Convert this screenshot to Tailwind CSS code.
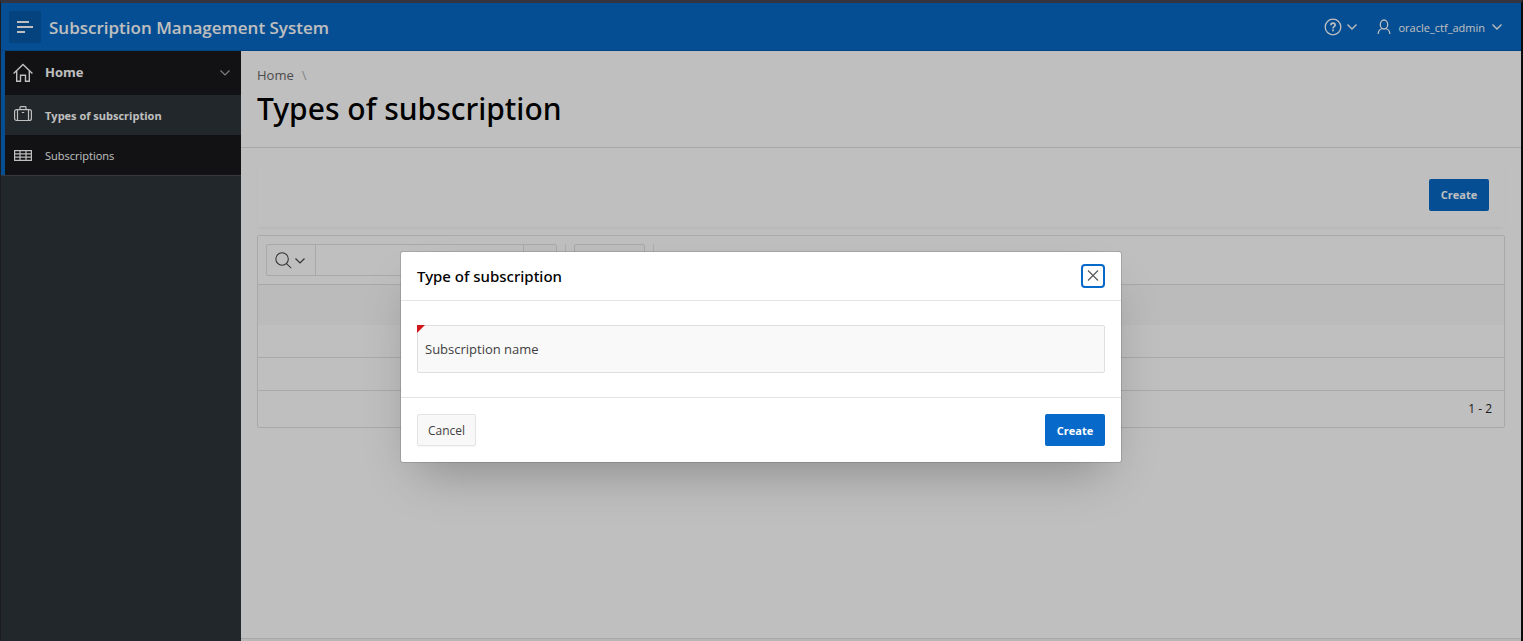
<!DOCTYPE html>
<html lang="en">
<head>
<meta charset="utf-8">
<meta name="viewport" content="width=device-width, initial-scale=1">
<title>Types of subscription</title>
<script src="https://cdn.jsdelivr.net/npm/@tailwindcss/browser@4"></script>
</head>
<body class="min-h-screen bg-[#1c1c1e] font-['Open_Sans','Noto_Sans',sans-serif] text-xs text-[#262626]">
<div class="flex min-h-screen flex-col border-t-3 border-r-2 border-l border-t-[#33343e] border-r-[#0b0b0f] border-l-[#1c1c1e]">
<div class="relative flex grow flex-col bg-white">

  <header class="flex h-12 items-center bg-[#0769c4] pr-4.5 pl-2 text-white shadow-[inset_0_-1px_0_#055cad]">
    <button type="button" aria-label="Toggle navigation" class="flex size-8 items-center justify-center rounded-xs bg-[#065aa9]">
      <svg class="size-4" viewBox="0 0 16 16" fill="none" stroke="currentColor" stroke-width="2"><path d="M0 3h12M0 8h16M0 13h8"/></svg>
    </button>
    <a href="#" class="ml-2 pt-0.5 text-[17px] leading-6 font-semibold">Subscription Management System</a>
    <nav class="ml-auto flex items-center gap-4.5" aria-label="User">
      <button type="button" aria-label="Help" class="flex items-center gap-1">
        <svg class="size-[18px]" viewBox="0 0 18 18" fill="none" stroke="currentColor" stroke-width="1.300"><circle cx="9" cy="9" r="7.800"/><path d="M6.900 7.300c0-1.300.9-2.100 2.100-2.100s2.100.8 2.100 1.900c0 1.600-2.100 1.600-2.100 3.300" stroke-width="1.700"/><path d="M9 11.600v1.700" stroke-width="1.700"/></svg>
        <svg class="h-4 w-3" viewBox="0 0 12 16" fill="none" stroke="currentColor" stroke-width="1.400"><path d="M1.500 5.500 6 10l4.500-4.500"/></svg>
      </button>
      <button type="button" class="flex items-center gap-1.5 text-[11px] leading-4">
        <svg class="size-4" viewBox="0 0 16 16" fill="none" stroke="currentColor" stroke-width="1.300"><ellipse cx="8" cy="5.500" rx="3.700" ry="4.500"/><path d="M6.300 9.500C4 10.300 2.200 11 2.200 15M9.700 9.500c2.300.8 4.100 1.500 4.100 5.500"/></svg>
        <span class="pt-0.5">oracle_ctf_admin</span>
        <svg class="h-4 w-3" viewBox="0 0 12 16" fill="none" stroke="currentColor" stroke-width="1.400"><path d="M1.500 5.500 6 10l4.500-4.500"/></svg>
      </button>
    </nav>
  </header>

  <div class="flex grow">
    <aside class="w-60 shrink-0 bg-[#2d3539] text-white">
      <nav class="border-b border-[#474b50]" aria-label="Main">
        <ul class="border-l-4 border-[#0769c4] bg-[#18191d] text-[11px]">
          <li class="flex h-11 items-center pr-2 pl-2">
            <a href="#" class="flex grow items-center gap-3 text-[13px] font-bold">
              <svg class="size-5" viewBox="0 0 20 20" fill="none" stroke="currentColor" stroke-width="1.400"><path d="M.6 10.500 10 1.500l9.400 9M3.700 8v10.300h3.800v-6h5v6h3.800V8"/></svg>
              Home
            </a>
            <button type="button" aria-label="Collapse Home" class="text-[#aaa]">
              <svg class="h-4 w-4" viewBox="0 0 16 16" fill="none" stroke="currentColor" stroke-width="1.200"><path d="M3.500 5.500 8 10l4.500-4.500"/></svg>
            </button>
          </li>
          <li class="bg-[#2d3539]">
            <a href="#" aria-current="page" class="flex h-10 items-center gap-3 pl-2 font-bold">
              <svg class="mb-0.5 h-4 w-5" viewBox="0 0 20 16" fill="none" stroke="currentColor" stroke-width="1.200"><rect x="1.600" y="3.600" width="16.800" height="10.900" rx="2"/><path d="M4.500 3.600v10.900M15.500 3.600v10.900M7 3.600V1.500q0-.8.8-.8h4.400q.8 0 .8.800v2.100M8.800 6.500h2.400"/></svg>
              <span class="pt-0.5">Types of subscription</span>
            </a>
          </li>
          <li>
            <a href="#" class="flex h-10 items-center gap-3 pl-2">
              <svg class="h-4 w-5" viewBox="0 0 20 16" fill="none" stroke="currentColor" stroke-width="1.200"><path d="M1.600 3.600h16.800v9.800H1.600zM1.600 6.800h16.800M1.600 10.200h16.800M7 3.600v9.800M13 3.600v9.800"/></svg>
              <span class="pt-0.5">Subscriptions</span>
            </a>
          </li>
        </ul>
      </nav>
    </aside>

    <main class="flex min-w-0 grow flex-col">
      <div class="h-[97px] border-b border-[#e0e0e0] px-4 pt-4">
        <nav aria-label="Breadcrumb" class="flex gap-2 text-[13px] leading-4 text-[#666]">
          <a href="#">Home</a><span class="text-[#b0b0b0]">\</span>
        </nav>
        <h1 class="mt-1 font-['Noto_Sans','Open_Sans',sans-serif] text-[30px] leading-11 font-medium text-black">Types of subscription</h1>
      </div>

      <div class="grow px-4 pt-[15px]">
        <section class="flex h-16 items-center justify-end rounded-xs px-4 shadow-[0_2px_4px_-2px_#00000018]">
          <button type="button" class="h-8 w-15 rounded-xs bg-[#0769c4] text-[11px] font-bold text-white">Create</button>
        </section>

        <section class="mt-2 rounded-xs border border-[#e2e2e2]">
          <div class="flex h-12 items-center px-2">
            <div class="flex h-8 w-[291px] divide-x divide-[#e2e2e2] rounded-xs border border-[#e2e2e2]">
              <button type="button" aria-label="Select columns to search" class="flex w-[49px] shrink-0 items-center pl-2 text-[#404040]">
                <svg class="size-[17px]" viewBox="0 0 18 18" fill="none" stroke="currentColor" stroke-width="1.100"><circle cx="7.500" cy="7.500" r="6.600"/><path d="m12.200 12.200 5 5"/></svg>
                <svg class="ml-0.5 h-4 w-3" viewBox="0 0 12 16" fill="none" stroke="currentColor" stroke-width="1.100"><path d="M1.500 6.500 6 11l4.500-4.500"/></svg>
              </button>
              <input type="text" aria-label="Search report" class="min-w-0 grow px-2">
              <button type="button" class="w-8 shrink-0 bg-[#fcfcfc]" aria-label="Search"></button>
            </div>
            <div class="ml-2 h-8 w-px bg-[#e8e8e8]"></div>
            <button type="button" aria-label="Actions" class="ml-2 h-8 w-[71px] rounded-xs border border-[#e2e2e2] bg-[#fcfcfc]"></button>
            <div class="ml-2 h-8 w-px bg-[#e8e8e8]"></div>
          </div>
          <table class="w-full border-t border-[#e2e2e2]" aria-label="Types of subscription">
            <thead><tr class="h-10 bg-[#fafafa]"><th scope="col"></th></tr></thead>
            <tbody>
              <tr class="h-[33px] border-b border-[#e2e2e2]"><td></td></tr>
              <tr class="h-[33px] border-b border-[#e2e2e2]"><td></td></tr>
            </tbody>
          </table>
          <p class="px-3 py-2.5 text-right leading-4">1 - 2</p>
        </section>
      </div>
      <footer class="h-[3px] border-t border-[#dedede] bg-[#f5f5f5]"></footer>
    </main>
  </div>

  <div class="absolute inset-0 bg-black/25"></div>

  <div class="absolute inset-0 flex items-start justify-center pt-[249px]">
    <section role="dialog" aria-modal="true" aria-labelledby="dialog-title" class="w-full max-w-[720px] rounded-xs bg-white shadow-[0_0_0_1px_#00000020,0_24px_48px_-16px_#00000048]">
      <div class="flex h-[49px] items-center justify-between border-b border-[#e4e4e4] px-4">
        <h2 id="dialog-title" class="font-['Noto_Sans','Open_Sans',sans-serif] text-[15px] leading-6 font-medium text-black">Type of subscription</h2>
        <button type="button" aria-label="Close" class="flex size-6 items-center justify-center rounded-sm border-2 border-[#0769c9] text-[#555]">
          <svg class="size-4" viewBox="0 0 16 16" fill="none" stroke="currentColor" stroke-width="1.100"><path d="m3 2.500 10 10M13 2.500l-10 10"/></svg>
        </button>
      </div>
      <div class="border-b border-[#e4e4e4] px-4 py-6">
        <div class="relative">
          <input id="sub-name" type="text" required class="block h-12 w-full rounded-xs border border-[#dfdfdf] bg-[#f9f9f9] px-2">
          <label for="sub-name" class="absolute inset-y-0 left-2 flex items-center pt-0.5 text-[13px] text-[#404040]">Subscription name</label>
          <svg class="absolute top-0 left-0 size-2" viewBox="0 0 8 8"><path fill="#d2181c" d="M0 0h8L0 8z"/></svg>
        </div>
      </div>
      <div class="flex justify-between p-4">
        <button type="button" class="h-8 w-[59px] rounded-xs border border-[#e4e4e4] bg-[#f8f8f8] pt-0.5 text-[12px] text-[#404040] shadow-[0_1px_2px_#0000000a]">Cancel</button>
        <button type="button" class="h-8 w-15 rounded-xs bg-[#0769c9] pt-0.5 text-[11px] font-bold text-white">Create</button>
      </div>
    </section>
  </div>

</div>
</div>
</body>
</html>
